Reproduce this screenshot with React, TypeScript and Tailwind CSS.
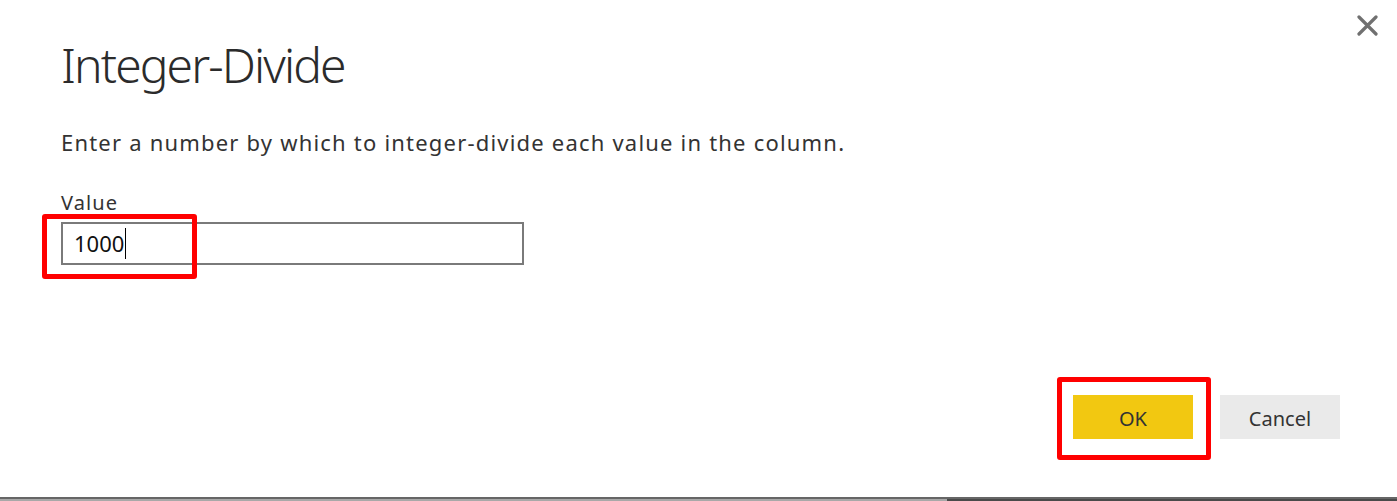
export default function App() {
  return (
    <div
      className="w-[1397px] h-[501px] bg-white flex flex-col overflow-hidden"
      style={{ fontFamily: '"Segoe UI", "Noto Sans", "Open Sans", sans-serif' }}
    >
      <div className="flex-1 flex flex-col pl-[61px] pr-[57px]">
        {/* header */}
        <div className="flex justify-between items-start">
          <h1 className="mt-[41px] text-[48px] leading-[48px] font-light tracking-[-1.9px] text-[#2b2b2b]">
            Integer-Divide
          </h1>
          <button className="mt-[15px] -mr-[38px] w-[21px] h-[21px] flex items-center justify-center">
            <svg width="21" height="21" viewBox="0 0 21 21">
              <path d="M2 2 L19 19 M19 2 L2 19" stroke="#707070" strokeWidth="3.2" strokeLinecap="round" />
            </svg>
          </button>
        </div>

        <p className="mt-[43px] text-[22px] leading-[21px] tracking-[1.2px] text-[#333333]">
          Enter a number by which to integer-divide each value in the column.
        </p>

        <label className="mt-[40px] text-[20px] leading-[20px] tracking-[1.1px] text-[#333333]">Value</label>

        <div className="relative mt-[9px] w-[463px] h-[43px]">
          <div className="w-full h-full border-2 border-[#7a7a7a] flex items-center pl-[11px] text-[22px] text-[#111111]">
            <span>1000</span>
            <span className="ml-[1px] w-[1px] h-[31px] bg-black" />
          </div>
          <div className="absolute left-[-19px] top-[-8px] w-[155px] h-[65px] border-[5px] border-[#ff0000] rounded-[3px]" />
        </div>

        <div className="mt-auto mb-[58px] flex justify-end gap-[27px]">
          <div className="relative">
            <button className="w-[120px] h-[44px] pt-[3px] bg-[#f2c811] text-[20px] text-[#333333]">OK</button>
            <div className="absolute left-[-16px] top-[-18px] w-[154px] h-[83px] border-[5px] border-[#ff0000] rounded-[3px]" />
          </div>
          <button className="w-[120px] h-[44px] pt-[3px] bg-[#eaeaea] text-[20px] text-[#333333]">Cancel</button>
        </div>
      </div>

      {/* bottom edge */}
      <div className="h-[4px] flex flex-col">
        <div className="h-[2px] bg-[#666666]" />
        <div className="h-[2px] flex">
          <div className="w-[947px] bg-[#a8a8a8]" />
          <div className="flex-1 bg-[#4a4a4a]" />
        </div>
      </div>
    </div>
  );
}
